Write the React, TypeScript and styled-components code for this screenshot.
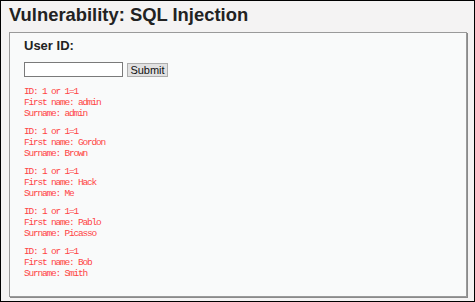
import React from 'react';
import styled, { createGlobalStyle } from 'styled-components';

const GlobalStyle = createGlobalStyle`
  html, body {
    margin: 0;
    padding: 0;
    background: #ffffff;
  }
`;

const Frame = styled.div`
  box-sizing: border-box;
  width: 475px;
  height: 302px;
  border: 1px solid #000;
  background: #f4f3f3;
  font-family: "Liberation Sans", Arial, sans-serif;
  display: flex;
  flex-direction: column;
  overflow: hidden;
`;

const Title = styled.h1`
  margin: 2px 0 0 8px;
  font-size: 18.4px;
  line-height: 24px;
  font-weight: bold;
  color: #222;
`;

const Panel = styled.div`
  box-sizing: border-box;
  margin: 5px 0 0 8px;
  width: 458px;
  height: 265px;
  background: #f9fafa;
  border: 1px solid #9a9a9a;
  box-shadow: 1px 1px 0 #8a8a8a;
  padding: 5px 14px;
`;

const Label = styled.h3`
  margin: 0;
  font-size: 13px;
  line-height: 16px;
  font-weight: bold;
  color: #222;
`;

const Form = styled.form`
  display: flex;
  align-items: center;
  gap: 4px;
  margin-top: 8px;
`;

const TextInput = styled.input`
  box-sizing: border-box;
  width: 99px;
  height: 15px;
  margin: 0;
  padding: 0 2px;
  border: 1px solid #7a7a7a;
  background: #fff;
  font-size: 11px;
`;

const Button = styled.button`
  box-sizing: border-box;
  width: 41px;
  height: 14px;
  padding: 0;
  margin: 0;
  border: 1px solid #adadad;
  background: #e1e1e1;
  font-family: "Liberation Sans", Arial, sans-serif;
  font-size: 11px;
  line-height: 12px;
  color: #111;
`;

const Results = styled.div`
  margin-top: 9px;
  display: flex;
  flex-direction: column;
  gap: 7px;
`;

const Result = styled.pre`
  margin: 0;
  font-family: "Liberation Mono", "Courier New", monospace;
  font-size: 9.5px;
  letter-spacing: -1.2px;
  line-height: 11px;
  color: #ff4545;
`;

const rows = [
  ['admin', 'admin'],
  ['Gordon', 'Brown'],
  ['Hack', 'Me'],
  ['Pablo', 'Picasso'],
  ['Bob', 'Smith'],
];

export default function App() {
  return (
    <>
      <GlobalStyle />
      <Frame>
        <Title>Vulnerability: SQL Injection</Title>
        <Panel>
          <Label>User ID:</Label>
          <Form onSubmit={(e) => e.preventDefault()}>
            <TextInput type="text" name="id" />
            <Button type="submit">Submit</Button>
          </Form>
          <Results>
            {rows.map(([first, last]) => (
              <Result key={first}>
                {`ID: 1 or 1=1\nFirst name: ${first}\nSurname: ${last}`}
              </Result>
            ))}
          </Results>
        </Panel>
      </Frame>
    </>
  );
}
